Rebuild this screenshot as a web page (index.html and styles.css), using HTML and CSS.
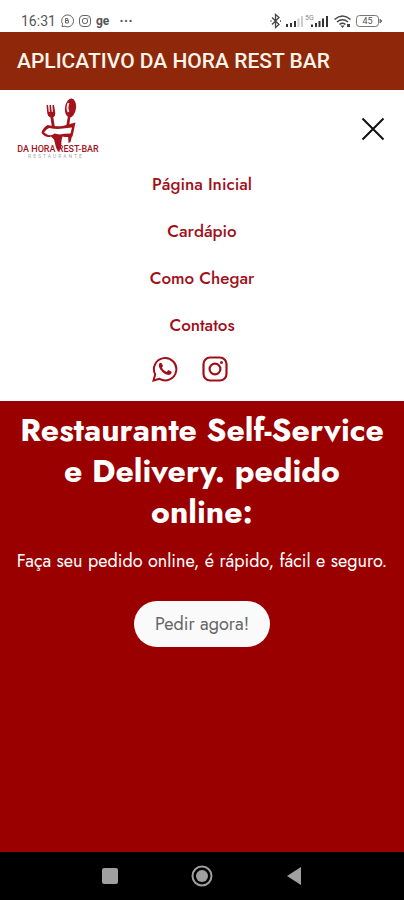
FILE: index.html
```
<!DOCTYPE html>
<html lang="pt-BR">
<head>
<meta charset="utf-8">
<meta name="viewport" content="width=device-width, initial-scale=1">
<title>Da Hora Rest Bar</title>
<link rel="stylesheet" href="styles.css">
</head>
<body>
<div class="status">
  <div class="status-group">
    <span class="time">16:31</span>
    <svg width="14" height="14" viewBox="0 0 14 14" fill="none" stroke="#666"><path d="M2 12.500l.6-2.300A6 6 0 1 1 5 12.300z"/><path d="M5.500 4.500h2.300v2H5.500zM5.500 6.500h2.800v2.500H5.500z"/></svg>
    <svg width="14" height="14" viewBox="0 0 14 14" fill="none" stroke="#666"><rect x="1.500" y="1.500" width="11" height="11" rx="3.500"/><circle cx="7" cy="7" r="2.700"/><path d="M10 3.500v1"/></svg>
    <span class="ge">ge</span>
    <span class="more">···</span>
  </div>
  <div class="status-group right">
    <svg width="12" height="16" viewBox="0 0 12 16" fill="none" stroke="#444" stroke-width="1.300"><path d="M2 4.500l7 7-3.500 3V1.500l3.500 3-7 7M.5 8h1M10 8h1"/></svg>
    <svg width="45" height="16" viewBox="0 0 45 16" fill="#333"><path d="M1 11h2v3H1zM5 10h2v4H5zM9 8h2v6H9z"/><path fill="#ccc" d="M12.500 5.500h2V14h-2zM16 3h2v11h-2z"/><path d="M26 11.500h2V14h-2zM30 10h2v4h-2zM33.500 8h2v6h-2zM37 5.500h2V14h-2zM41 3h2v11h-2z"/><text class="net" x="20" y="7">5G</text></svg>
    <svg width="19" height="16" viewBox="0 0 19 16" fill="none" stroke="#444" stroke-width="1.600"><path d="M1.500 6.500Q9.500-.5 17.500 6.500M4 9q5.500-4.500 11 0M6.500 11.500q3-2.500 6 0"/><path fill="#444" stroke="none" d="M7.500 12.500h4l-2 2.500zM14 11h3v3h-3z"/></svg>
    <svg width="28" height="14" viewBox="0 0 28 14" fill="none" stroke="#777"><rect x="1.500" y="1.500" width="22" height="11" rx="3"/><path fill="#777" d="M25 5l2 2-2 2z"/><text class="charge" x="12.500" y="10">45</text></svg>
  </div>
</div>
<div class="appbar">APLICATIVO DA HORA REST BAR</div>
<header class="header">
  <div class="brand-row">
    <a href="#" class="logo" aria-label="Da Hora Rest Bar">
      <svg width="82" height="62" viewBox="0 0 82 62">
        <g fill="#a3131d">
          <path d="M29.500 7h1.500l.8 7h1L32.500 7h1.500l.8 7h1L35.500 7H37l1.300 8q.2 3-2 4.200L38 30h-3L33.500 19.500q-2.800-.8-3.200-4z"/>
          <ellipse cx="53.500" cy="10" rx="5.500" ry="9.500" transform="rotate(8 53.500 10)"/>
          <path d="M51 18h2.500L52 29h-3z"/>
          <path d="M24.500 35q1-5 6-8 8 2 15 1l13-3.500-3 14q-6 1-10 0l-1 4-.5 8-3 3-2-4-2-8-3-3q-5 2-9.500-3.500z"/>
          <path d="M51 37l4 1-1.500 6-2 1z"/>
        </g>
        <path d="M51.500 5q-2 5 0 9" fill="none" stroke="#f6dddd" stroke-width="2"/>
        <path d="M27 34.500q2-3.500 5-4.500 8 1.500 14 .5l9-1-1.500 6q-7 0-11 1l-5-1q-4 4-10.500-1z" fill="#fff"/>
      <text class="logo-name" x="41" y="54">DA HORA REST-BAR</text>
        <text class="logo-sub" x="39" y="60">RESTAURANTE</text>
      </svg>
    </a>
    <button class="close" type="button" aria-label="Fechar menu">
      <svg width="26" height="26" viewBox="0 0 26 26" fill="none" stroke="#111" stroke-width="2"><path d="M2.500 2.500l21 21M23.500 2.500l-21 21"/></svg>
    </button>
  </div>
  <nav class="menu">
    <a href="#">Página Inicial</a>
    <a href="#">Cardápio</a>
    <a href="#">Como Chegar</a>
    <a href="#">Contatos</a>
  </nav>
  <div class="social">
    <a href="#" aria-label="WhatsApp"><svg width="26" height="26" viewBox="0 0 26 26" fill="none" stroke="#a0101a" stroke-width="2"><path d="M1.500 24.500l1.700-6.100A11.200 11.200 0 1 1 7.500 22.900z"/><path fill="#a0101a" stroke="none" d="M9.500 7c-.6-.6-1.300-.4-1.900.3-3 3.400 4.200 12 9.300 11.700 2-.2 3.100-1.800 2.700-3.200l-3.300-1.700-1.700 1.800c-2-.7-3.800-2.300-4.700-4.300l1.200-1.600z"/></svg></a>
    <a href="#" aria-label="Instagram"><svg width="26" height="26" viewBox="0 0 26 26" fill="none" stroke="#a0101a" stroke-width="2.200"><rect x="1.500" y="1.500" width="23" height="23" rx="6.500"/><circle cx="13" cy="13" r="5.400"/><circle cx="19.500" cy="6.500" r="1.500" fill="#a0101a" stroke="none"/></svg></a>
  </div>
</header>
<main class="hero">
  <h1>Restaurante Self-Service e Delivery. pedido online:</h1>
  <p>Faça seu pedido online, é rápido, fácil e seguro.</p>
  <button class="order" type="button">Pedir agora!</button>
</main>
<div class="sysnav">
  <button type="button" aria-label="Recentes"><svg width="22" height="22" viewBox="0 0 22 22"><rect x="3" y="3" width="16" height="16" rx="2" fill="#a0a0a0"/></svg></button>
  <button type="button" aria-label="Início"><svg width="22" height="22" viewBox="0 0 22 22"><circle cx="11" cy="11" r="9.500" fill="none" stroke="#a0a0a0" stroke-width="2"/><circle cx="11" cy="11" r="6" fill="#a0a0a0"/></svg></button>
  <button type="button" aria-label="Voltar"><svg width="22" height="22" viewBox="0 0 22 22"><path d="M4 11L18 2v18z" fill="#a0a0a0"/></svg></button>
</div>
</body>
</html>
```
FILE: styles.css
```
* {
  box-sizing: border-box;
}

body {
  margin: 0;
  min-height: 100vh;
  display: flex;
  flex-direction: column;
  background: #fff;
  font-family: Jost, Lato, sans-serif;
}

svg {
  display: block;
}

button {
  border: 0;
  padding: 0;
  background: none;
  font: inherit;
}

a {
  color: #a0101a;
  text-decoration: none;
}

.status {
  display: flex;
  justify-content: space-between;
  height: 32px;
  padding: 10px 21px 0;
  color: #555;
  font-family: Roboto, sans-serif;
}

.status-group {
  display: flex;
  align-items: center;
  gap: 4px;
}

.time {
  font-size: 14px;
}

.ge {
  font-size: 12px;
  font-weight: 700;
}

.more {
  padding-left: 6px;
  font-size: 16px;
  font-weight: 500;
}

.right {
  gap: 3px;
}

.net {
  font-size: 7px;
  fill: #888;
}

.charge {
  font-size: 9px;
  text-anchor: middle;
  fill: #555;
  stroke: none;
}

.appbar {
  padding: 0 17px;
  background: #8f280a;
  color: #fff5ea;
  font: 500 21px/58px Roboto, sans-serif;
}

.header {
  padding-bottom: 19px;
}

.brand-row {
  display: flex;
  align-items: center;
  justify-content: space-between;
  padding: 8px 18px 1px 17px;
}

.logo-name {
  font: 500 9px Roboto, sans-serif;
  text-anchor: middle;
  fill: #a3131d;
}

.logo-sub {
  font: 5px Roboto, sans-serif;
  letter-spacing: 2px;
  text-anchor: middle;
  fill: #aaa;
}

.menu {
  display: flex;
  flex-direction: column;
  align-items: center;
  font-size: 17px;
  font-weight: 500;
  line-height: 47px;
}

.social {
  display: flex;
  justify-content: center;
  gap: 24px;
  padding: 7px 24px 0 0;
}

.hero {
  flex: 1;
  padding: 9px 8px 40px;
  background: #9b0000;
  color: #fff;
  text-align: center;
}

h1 {
  margin: 0;
  padding: 0 8px;
  font-size: 32px;
  font-weight: 700;
  line-height: 41px;
}

p {
  margin: 15px 0 27px;
  font-size: 18px;
  line-height: 26px;
}

.order {
  height: 46px;
  padding: 0 21px;
  border-radius: 23px;
  background: #fafafa;
  color: #666;
  font-size: 18px;
}

.sysnav {
  display: flex;
  justify-content: center;
  gap: 70px;
  height: 48px;
  background: #000;
}
```
